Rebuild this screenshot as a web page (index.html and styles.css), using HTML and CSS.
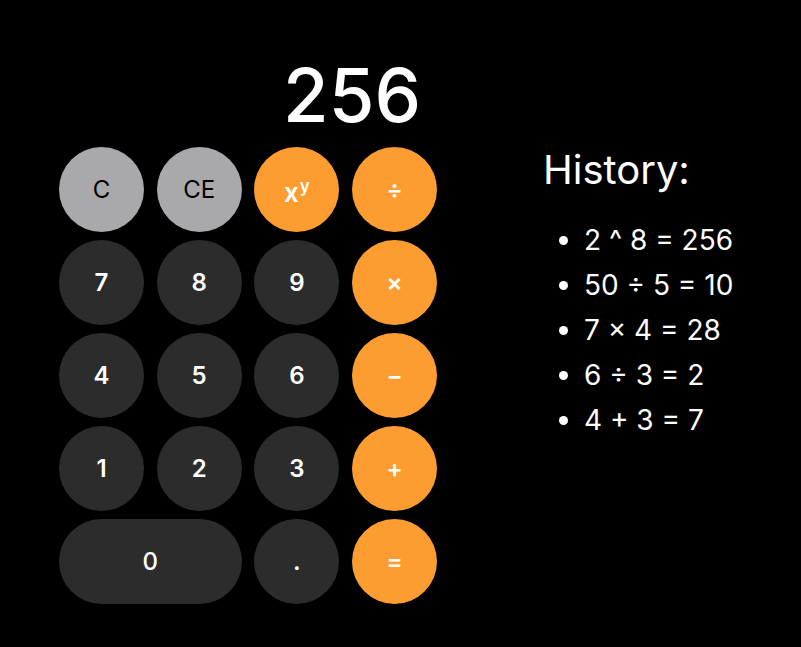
FILE: index.html
```html
<!DOCTYPE html>
<html lang="en">
<head>
<meta charset="utf-8">
<title>Calculator</title>
<link rel="stylesheet" href="styles.css">
</head>
<body>
<main class="app">
  <section class="calc">
    <div class="display">256</div>
    <div class="keys">
      <button class="key fn">C</button>
      <button class="key fn">CE</button>
      <button class="key op"><span class="pow">x<sup>y</sup></span></button>
      <button class="key op">÷</button>
      <button class="key num">7</button>
      <button class="key num">8</button>
      <button class="key num">9</button>
      <button class="key op">×</button>
      <button class="key num">4</button>
      <button class="key num">5</button>
      <button class="key num">6</button>
      <button class="key op">−</button>
      <button class="key num">1</button>
      <button class="key num">2</button>
      <button class="key num">3</button>
      <button class="key op">+</button>
      <button class="key num zero">0</button>
      <button class="key num">.</button>
      <button class="key op">=</button>
    </div>
  </section>
  <aside class="history">
    <h2 class="history-title">History:</h2>
    <ul class="history-list">
      <li>2 ^ 8 = 256</li>
      <li>50 ÷ 5 = 10</li>
      <li>7 × 4 = 28</li>
      <li>6 ÷ 3 = 2</li>
      <li>4 + 3 = 7</li>
    </ul>
  </aside>
</main>
</body>
</html>
```

FILE: styles.css
```css
* { box-sizing: border-box; }

html, body {
  margin: 0;
  padding: 0;
  background: #000;
  color: #fff;
  font-family: Inter, "Liberation Sans", Arial, sans-serif;
}

.app {
  display: flex;
  align-items: flex-start;
  padding-left: 59px;
  gap: 106px;
}

.calc {
  width: 378px;
  padding-top: 58px;
}

.display {
  height: 74px;
  line-height: 74px;
  font-size: 74px;
  font-weight: 500;
  text-align: right;
  padding-right: 16px;
  margin-bottom: 15px;
}

.keys {
  display: grid;
  grid-template-columns: repeat(4, 85px);
  grid-auto-rows: 85px;
  column-gap: 12.67px;
  row-gap: 8px;
}

.key {
  border: none;
  margin: 0;
  padding: 0;
  border-radius: 50%;
  font-family: inherit;
  font-size: 24px;
  font-weight: 600;
  color: #fff;
  display: flex;
  align-items: center;
  justify-content: center;
  line-height: 1;
}

.key.fn {
  background: #a9a9ac;
  color: #000;
  font-weight: 400;
}

.key.num {
  background: #2c2c2c;
}

.key.op {
  background: #fd9c30;
}

.key.zero {
  grid-column: span 2;
  border-radius: 42.5px;
  font-weight: 500;
}

.pow {
  font-size: 26px;
  line-height: 1;
  margin-top: 4px;
}

.pow sup {
  font-size: 17px;
  line-height: 1;
  vertical-align: 10px;
  margin-left: 1px;
}

.history {
  padding-top: 150px;
}

.history-title {
  margin: 0 0 28px;
  font-size: 40px;
  line-height: 40px;
  font-weight: 400;
}

.history-list {
  margin: 0;
  padding-left: 41px;
  font-size: 28px;
  line-height: 45px;
  font-weight: 400;
}
```
